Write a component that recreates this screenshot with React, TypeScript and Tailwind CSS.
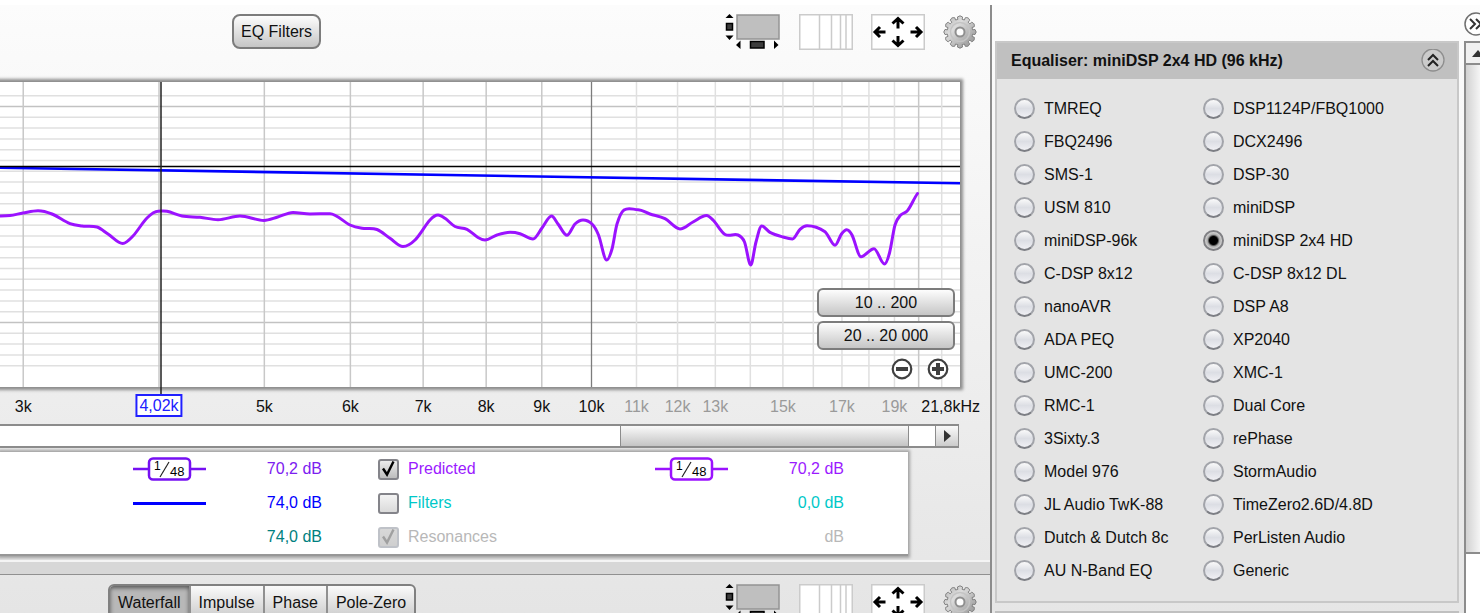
import { useState } from "react";
import type { ReactNode } from "react";

const PLOT_W = 960;
const PLOT_H = 305;

// Log frequency axis, f in kHz
const freqToX = (f: number) => 591.5 + 472 * Math.log(f / 10);
const pct = (x: number) => `${(x / PLOT_W) * 100}%`;

const majorFreqs = [3, 4, 5, 6, 7, 8, 9, 20];
const minorFreqs = [11, 12, 13, 14, 15, 16, 17, 18, 19, 21];
const cursorX = 161;

const axisLabels = [
  { f: 3, label: "3k" },
  { f: 5, label: "5k" },
  { f: 6, label: "6k" },
  { f: 7, label: "7k" },
  { f: 8, label: "8k" },
  { f: 9, label: "9k" },
  { f: 10, label: "10k" },
  { f: 11, label: "11k", dim: true },
  { f: 12, label: "12k", dim: true },
  { f: 13, label: "13k", dim: true },
  { f: 15, label: "15k", dim: true },
  { f: 17, label: "17k", dim: true },
  { f: 19, label: "19k", dim: true },
];

const predicted: [number, number][] = [
  [-6, 134], [0, 134], [10, 133.6], [23, 131], [38, 128.7], [52, 132], [70, 141.7], [82, 144], [97, 145],
  [108, 152], [122.7, 161.5], [133, 154], [147, 136], [158, 129.2], [167, 129.3], [182, 134], [200, 135.3],
  [218, 137.7], [240, 134], [264, 138.5], [277, 135.3], [293, 130.4], [310, 132], [330, 131.7], [350, 143],
  [362, 146.3], [377, 147.5], [390, 156.3], [403, 164.5], [415, 158], [430, 138], [438, 133], [445, 136.3],
  [455, 144.5], [467, 147.3], [478, 155.5], [485, 158], [497, 153], [510, 150.3], [520, 151.7], [533, 157],
  [542, 146], [551.5, 134], [558, 142], [567, 153.3], [575, 142], [583, 138], [592, 142], [598.5, 153],
  [606.7, 178], [612, 167], [617, 142], [624, 128], [638, 127.7], [650, 132], [665, 136.7], [680, 147],
  [693, 140], [706.5, 133.5], [713, 138], [725, 152.5], [738, 153], [744.5, 160], [750.7, 183], [756, 160],
  [761.7, 144], [770, 150.3], [783, 155], [792.5, 157], [800, 147.3], [807, 143.7], [825, 149.7], [835, 163.3],
  [841.5, 152], [846.7, 147.7], [852, 153], [861, 174.7], [874, 166.7], [884.5, 182], [889.5, 171], [895, 143],
  [900.5, 133.3], [907.5, 128.7], [917.5, 111.5],
];

// Cubic Hermite through the samples, flat at peaks and dips
function smoothPath(pts: [number, number][]) {
  const slope = pts.map(([x, y], i) => {
    const prev = pts[i - 1];
    const next = pts[i + 1];
    if (!prev || !next) return 0;
    if ((y - prev[1]) * (next[1] - y) <= 0) return 0;
    return (next[1] - prev[1]) / (next[0] - prev[0]);
  });
  slope[pts.length - 1] = -1.4;
  let d = `M${pts[0][0]} ${pts[0][1]}`;
  for (let i = 0; i < pts.length - 1; i++) {
    const [x1, y1] = pts[i];
    const [x2, y2] = pts[i + 1];
    const h = (x2 - x1) / 3;
    d += `C${x1 + h} ${y1 + slope[i] * h} ${x2 - h} ${y2 - slope[i + 1] * h} ${x2} ${y2}`;
  }
  return d;
}

const equalisers = [
  "TMREQ", "DSP1124P/FBQ1000",
  "FBQ2496", "DCX2496",
  "SMS-1", "DSP-30",
  "USM 810", "miniDSP",
  "miniDSP-96k", "miniDSP 2x4 HD",
  "C-DSP 8x12", "C-DSP 8x12 DL",
  "nanoAVR", "DSP A8",
  "ADA PEQ", "XP2040",
  "UMC-200", "XMC-1",
  "RMC-1", "Dual Core",
  "3Sixty.3", "rePhase",
  "Model 976", "StormAudio",
  "JL Audio TwK-88", "TimeZero2.6D/4.8D",
  "Dutch & Dutch 8c", "PerListen Audio",
  "AU N-Band EQ", "Generic",
];

const tabs = ["Waterfall", "Impulse", "Phase", "Pole-Zero"];

const raised = "border-2 border-[#7c7c7c] bg-linear-to-b from-[#fdfdfd] to-[#c6c6c6]";

function ScrollbarsIcon() {
  return (
    <svg width="56" height="36" viewBox="0 0 56 36">
      <rect x="12" y="1" width="42" height="24" fill="#bfbfbf" stroke="#949494" strokeWidth="1.5" />
      <path d="M4.500 0L8.500 4H0.500ZM4.500 26L8.500 21.500H0.500Z" fill="#000" />
      <rect x="1.500" y="9.500" width="6" height="6.500" fill="#3c3c3c" stroke="#000" strokeWidth="1.500" />
      <path d="M11 31L15.500 26.500V35ZM53.500 31L49 26.500V35Z" fill="#000" />
      <rect x="25.500" y="27.500" width="13.500" height="6.500" fill="#3c3c3c" stroke="#000" strokeWidth="1.500" />
    </svg>
  );
}

function LogGridIcon() {
  return (
    <svg width="54" height="36" viewBox="0 0 54 36">
      <rect x="0.750" y="0.750" width="52.500" height="34.500" fill="#fff" stroke="#cbcbcb" strokeWidth="1.500" />
      <path d="M20.500 1V35M32.500 1V35M41.500 1V35M47 1V35" stroke="#cbcbcb" strokeWidth="1.500" />
    </svg>
  );
}

function ArrowsIcon() {
  return (
    <svg width="54" height="36" viewBox="0 0 54 36">
      <rect x="0.750" y="0.750" width="52.500" height="34.500" fill="#fff" stroke="#cbcbcb" strokeWidth="1.500" />
      <g fill="none" stroke="#000" strokeWidth="3">
        <path d="M27 14.500V4.500M21.500 9.500L27 4.500L32.500 9.500" />
        <path d="M27 22V31.500M21.500 26.500L27 31.500L32.500 26.500" />
        <path d="M14.500 18H4.500M9 13L4 18L9 23" />
        <path d="M39.500 18H49.500M45 13L50 18L45 23" />
      </g>
    </svg>
  );
}

function GearIcon({ id }: { id: string }) {
  const teeth = 12;
  const step = (Math.PI * 2) / teeth;
  const at = (r: number, a: number) => `${(17 + r * Math.sin(a)).toFixed(2)} ${(17 - r * Math.cos(a)).toFixed(2)}`;
  let d = "";
  for (let i = 0; i < teeth; i++) {
    const a = i * step;
    d += `${i ? "L" : "M"}${at(12.8, a - 0.17)}L${at(15.2, a - 0.17)}Q${at(17.4, a)} ${at(15.2, a + 0.17)}L${at(12.8, a + 0.17)}`;
  }
  return (
    <svg width="34" height="36" viewBox="0 0 34 34">
      <defs>
        <linearGradient id={id} x1="0" y1="0" x2="1" y2="1">
          <stop offset="0" stopColor="#b0b0b0" />
          <stop offset="0.350" stopColor="#dcdcdc" />
          <stop offset="1" stopColor="#8a8a8a" />
        </linearGradient>
      </defs>
      <path d={`${d}Z`} fill={`url(#${id})`} stroke="#828282" strokeWidth="1" />
      <circle cx="17" cy="17" r="9.500" fill="none" stroke="#c4c4c4" strokeWidth="1.500" />
      <circle cx="17" cy="17" r="4.500" fill="#fdfdfd" stroke="#8f8f8f" strokeWidth="2" />
    </svg>
  );
}

function Toolbar({ gearId, children }: { gearId: string; children: ReactNode }) {
  return (
    <div className="flex items-start justify-between pt-[9px] pr-[13px]">
      {children}
      <div className="flex gap-[18px]">
        <button type="button" aria-label="Toggle scrollbars"><ScrollbarsIcon /></button>
        <button type="button" aria-label="Frequency axis"><LogGridIcon /></button>
        <button type="button" aria-label="Fit to data"><ArrowsIcon /></button>
        <button type="button" aria-label="Graph settings"><GearIcon id={gearId} /></button>
      </div>
    </div>
  );
}

function Plot() {
  const hLines = Array.from({ length: 26 }, (_, i) => i);
  return (
    <svg
      className="block h-[305px] w-full overflow-visible"
      viewBox={`0 0 ${PLOT_W} ${PLOT_H}`}
      preserveAspectRatio="none"
      fill="none"
    >
      {hLines.map((i) => (
        <path
          key={i}
          d={`M0 ${13.7 + i * 10.8}H${PLOT_W}`}
          stroke={i % 10 === 1 ? "#c2c2c2" : "#e0e0e0"}
          strokeWidth="1.5"
        />
      ))}
      {minorFreqs.map((f) => (
        <path key={f} d={`M${freqToX(f)} 0V${PLOT_H}`} stroke="#e0e0e0" strokeWidth="1.5" />
      ))}
      {majorFreqs.map((f) => (
        <path key={f} d={`M${freqToX(f)} 0V${PLOT_H}`} stroke="#c8c8c8" strokeWidth="1.5" />
      ))}
      <path d={`M591.5 0V${PLOT_H}`} stroke="#7c7c7c" strokeWidth="1.3" />
      <path d="M0 85.700L960 101.300" stroke="#0000ff" strokeWidth="2.600" />
      <path d={smoothPath(predicted)} stroke="#9b12ff" strokeWidth="3" strokeLinecap="round" />
      <path d="M0 84.500H960" stroke="#000" strokeWidth="1.500" />
      <path d={`M${cursorX} 0V313`} stroke="#222" strokeWidth="1.500" />
    </svg>
  );
}

function ZoomIcon({ plus }: { plus?: boolean }) {
  return (
    <svg width="22" height="22" viewBox="0 0 22 22" fill="none" stroke="#404040">
      <circle cx="11" cy="11" r="9.300" fill="#fff" strokeWidth="2.200" />
      <path d={plus ? "M5 11H17M11 5V17" : "M5 11H17"} strokeWidth="4" />
    </svg>
  );
}

function SmoothingBadge({ color }: { color: string }) {
  return (
    <svg className="block" width="73" height="24" viewBox="0 0 73 24">
      <path d="M0 12H16M57 12H73" stroke={color} strokeWidth="2.500" />
      <rect x="16" y="1.500" width="41" height="21" rx="4" fill="#fff" stroke={color} strokeWidth="2.500" />
      <path d="M36 5L27 20" stroke="#222" strokeWidth="1.200" />
      <text x="21" y="13" fontSize="12" fill="#000">1</text>
      <text x="37" y="19" fontSize="13" fill="#000">48</text>
    </svg>
  );
}

function LegendCheck({ id, checked, disabled, onChange }: { id: string; checked: boolean; disabled?: boolean; onChange?: () => void }) {
  return (
    <span className="relative block size-[21px] shrink-0">
      <input
        id={id}
        type="checkbox"
        checked={checked}
        disabled={disabled}
        onChange={onChange}
        className="block size-[21px] appearance-none rounded-[3px] border-2 border-[#84848a] bg-linear-to-b from-[#f4f4f4] to-[#dadada] checked:from-[#ececec] checked:to-[#bdbdbd] disabled:border-[#bfc2c8] disabled:from-[#d8d8d8] disabled:to-[#cfcfcf]"
      />
      {checked && (
        <svg className="pointer-events-none absolute inset-0" width="21" height="21" viewBox="0 0 21 21" fill="none">
          <path d="M5 9.500L9 15.500L15.500 2.500" stroke={disabled ? "#a0a0a0" : "#000"} strokeWidth="2.400" />
        </svg>
      )}
    </span>
  );
}

function Legend() {
  const [shown, setShown] = useState({ predicted: true, filters: false });
  const row = "flex items-center pl-[133px] pr-[64px]";
  return (
    <div className="mr-[82px] grid grid-rows-[34px_34px_34px] border-b-2 border-[#979797] bg-white shadow-[0_0_3px_2px_#a0a0a0]">
      <div className={row}>
        <span className="w-[73px]"><SmoothingBadge color="#7610f2" /></span>
        <span className="mr-[56px] w-[116px] text-right text-[#7c20f0]">70,2 dB</span>
        <LegendCheck id="predicted" checked={shown.predicted} onChange={() => setShown({ ...shown, predicted: !shown.predicted })} />
        <label htmlFor="predicted" className="ml-[9px] flex-1 text-[#9b1aff]">Predicted</label>
        <span className="w-[73px]"><SmoothingBadge color="#9b12ff" /></span>
        <span className="w-[116px] text-right text-[#9b1aff]">70,2 dB</span>
      </div>
      <div className={row}>
        <span className="h-[3px] w-[73px] bg-[#0000ff]" />
        <span className="mr-[56px] w-[116px] text-right text-[#0000ff]">74,0 dB</span>
        <LegendCheck id="filters" checked={shown.filters} onChange={() => setShown({ ...shown, filters: !shown.filters })} />
        <label htmlFor="filters" className="ml-[9px] flex-1 text-[#00c8c8]">Filters</label>
        <span className="w-[116px] text-right text-[#00c8c8]">0,0 dB</span>
      </div>
      <div className={row}>
        <span className="w-[73px]" />
        <span className="mr-[56px] w-[116px] text-right text-[#008080]">74,0 dB</span>
        <LegendCheck id="resonances" checked disabled />
        <label htmlFor="resonances" className="ml-[9px] flex-1 text-[#b8b8b8]">Resonances</label>
        <span className="w-[116px] text-right text-[#b8b8b8]">dB</span>
      </div>
    </div>
  );
}

function EqualiserPanel() {
  const [selected, setSelected] = useState("miniDSP 2x4 HD");
  return (
    <section className="border-2 border-[#c8c8c8] bg-[#e4e4e4]">
      <div className="flex h-9 items-center justify-between bg-[#c0c0c0] pl-[14px] pr-3">
        <h2 className="font-bold">Equaliser: miniDSP 2x4 HD (96 kHz)</h2>
        <button type="button" aria-label="Collapse">
          <svg className="block" width="24" height="24" viewBox="0 0 24 24" fill="none">
            <circle cx="12" cy="11" r="11" fill="#cbcbcb" stroke="#8e8e8e" strokeWidth="1.300" />
            <path d="M7 11L12 6L17 11M7 17L12 12L17 17" stroke="#222" strokeWidth="2" />
          </svg>
        </button>
      </div>
      <div className="grid grid-cols-[189px_1fr] pt-[13px] pb-[14px] pl-[17px]">
        {equalisers.map((name) => (
          <label key={name} className="flex h-[33px] items-center gap-[9px] whitespace-nowrap">
            <input
              type="radio"
              name="equaliser"
              checked={selected === name}
              onChange={() => setSelected(name)}
              className="size-[21px] shrink-0 appearance-none rounded-full border-2 border-[#a2a4aa] border-b-[#7c7e84] bg-linear-to-b from-[#fafafa] via-[#dcdee4] to-[#f0f0f4] checked:border-[#808084] checked:bg-[radial-gradient(circle,#000_0_4px,#aaa_6px,#e0e0e0_9px)]"
            />
            {name}
          </label>
        ))}
      </div>
    </section>
  );
}

export default function App() {
  const [tab, setTab] = useState("Waterfall");

  return (
    <div className="flex h-screen flex-col overflow-hidden bg-white pt-[5px] font-['Liberation_Sans',Arial,sans-serif] text-base leading-5 text-[#111]">
      <div className="flex min-h-0 flex-1">
        <main className="flex min-w-0 flex-1 flex-col overflow-hidden bg-linear-to-b from-[#fcfcfc] to-[#e5e5e5]">
          <Toolbar gearId="gear-top">
            <button type="button" className={`${raised} ml-[232px] h-[35px] rounded-lg px-[7px] pt-px`}>
              EQ Filters
            </button>
          </Toolbar>

          <div className="relative mt-8 mr-[30px]">
            <div className="relative bg-white shadow-[0_0_3px_3px_#8c8c8c]">
              <Plot />
              {/* range shortcuts sit over the grid */}
              <div className="absolute right-[5px] bottom-[7px] flex w-[138px] flex-col items-end gap-1">
                <button type="button" className={`${raised} h-[29px] w-full rounded-md`}>10 .. 200</button>
                <button type="button" className={`${raised} h-[29px] w-full rounded-md`}>20 .. 20 000</button>
                <div className="flex gap-[14px] pt-1 pr-[6px]">
                  <button type="button" aria-label="Zoom out"><ZoomIcon /></button>
                  <button type="button" aria-label="Zoom in"><ZoomIcon plus /></button>
                </div>
              </div>
            </div>
            <div className="relative h-[37px]">
              {axisLabels.map(({ f, label, dim }) => (
                <span
                  key={f}
                  className={`absolute top-[10px] -translate-x-1/2 ${dim ? "text-[#9a9a9a]" : ""}`}
                  style={{ left: pct(freqToX(f)) }}
                >
                  {label}
                </span>
              ))}
              <span
                className="absolute top-[7px] -translate-x-1/2 border-2 border-[#2020ff] bg-white px-[2px] leading-[19px] text-[#2020ff]"
                style={{ left: pct(159) }}
              >
                4,02k
              </span>
              <span className="absolute top-[10px] -right-[20px]">21,8kHz</span>
            </div>
          </div>

          <div className="mr-[31px] flex h-6 shrink-0 border-y-2 border-[#8c8c8c] bg-white">
            <div className="flex-1" />
            <div className="w-[289px] border-x border-[#8c8c8c] bg-linear-to-b from-[#fafafa] to-[#c4c4c4]" />
            <div className="w-[26px]" />
            <button
              type="button"
              aria-label="Scroll right"
              className="flex w-[24px] items-center justify-center border-x border-[#8c8c8c] bg-linear-to-b from-[#fafafa] to-[#cccccc]"
            >
              <svg width="7" height="12" viewBox="0 0 7 12"><path d="M0 0L7 6L0 12Z" fill="#333" /></svg>
            </button>
          </div>

          <div className="mt-1 shrink-0">
            <Legend />
          </div>

          <div className="mt-1 h-[15px] shrink-0 border-t-2 border-b border-t-[#f4f4f4] border-b-[#909090] bg-[#d7d7d7]" />

          <Toolbar gearId="gear-bottom">
            <div className="ml-[108px] flex h-[36px] overflow-hidden rounded-md border-2 border-[#808080] bg-linear-to-b from-[#fafafa] to-[#cccccc]">
              {tabs.map((t) => (
                <button
                  key={t}
                  type="button"
                  aria-pressed={t === tab}
                  onClick={() => setTab(t)}
                  className="border-r-2 border-[#909090] px-2 pt-[2px] last:border-r-0 aria-pressed:bg-[#b8b8b8] aria-pressed:shadow-[inset_0_2px_4px_#555]"
                >
                  {t}
                </button>
              ))}
            </div>
          </Toolbar>
        </main>

        <aside className="flex w-[490px] shrink-0 overflow-hidden border-l-2 border-[#8c8c8c] bg-linear-to-b from-[#fcfcfc] to-[#e6e6e6]">
          <div className="flex min-w-0 flex-1 flex-col gap-2 pt-9 pr-[5px] pl-[3px]">
            <EqualiserPanel />
            <div className="h-9 shrink-0 bg-[#c0c0c0]" />
          </div>
          <div className="flex w-[16px] shrink-0 flex-col overflow-hidden pt-[7px]">
            <button type="button" aria-label="Hide panel" className="shrink-0">
              <svg className="block" width="40" height="24" viewBox="0 0 40 24" fill="none">
                <circle cx="12" cy="12" r="11" fill="#fff" stroke="#707070" strokeWidth="1.500" />
                <path d="M6 7L11 12L6 17M12 7L17 12L12 17" stroke="#333" strokeWidth="2" />
              </svg>
            </button>
            <div className="mt-[5px] flex h-[513px] w-10 shrink-0 flex-col border-2 border-[#8c8c8c] bg-linear-to-r from-[#d2d2d2] to-[#ffffff] to-50%">
              <button type="button" aria-label="Scroll up" className="h-[22px] shrink-0 border-b-2 border-[#8c8c8c] bg-[#f0f0f0] pl-[6px]">
                <svg className="block" width="12" height="7" viewBox="0 0 12 7"><path d="M0 7L6 0L12 7Z" fill="#333" /></svg>
              </button>
            </div>
            <div className="w-10 flex-1 border-l-2 border-[#8c8c8c] bg-white" />
          </div>
        </aside>
      </div>
    </div>
  );
}
